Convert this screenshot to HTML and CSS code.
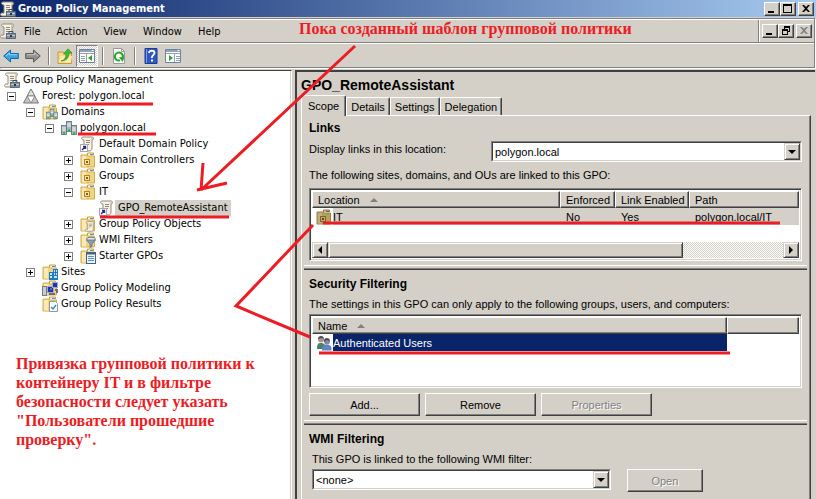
FILE: index.html
```html
<!DOCTYPE html>
<html lang="en">
<head>
    <meta charset="UTF-8">
    <meta name="viewport" content="width=device-width, initial-scale=1.0">
    <title>Group Policy Management</title>
    <link rel="stylesheet" href="styles.css">
</head>
<body>
    <!-- Icon set -->
    <svg class="sprite" aria-hidden="true">
        <symbol id="i-scroll" viewBox="0 0 16 16">
            <path d="M3 1h9c2 0 2 3 0 3v8c0 2-1 3-3 3H2c-2 0-2-3 0-3h2V4C1 4 1 1 3 1z" fill="#f6f2e4" stroke="#918b7a"/>
            <path d="M6 4.500h4M6 6.500h4M6 8.500h3" stroke="#8d8878"/>
            <path d="M12 4V1.500" stroke="#b9b29c"/>
        </symbol>
        <symbol id="i-gpm" viewBox="0 0 16 16">
            <use href="#i-scroll"/>
            <rect x="6.500" y="10.500" width="9" height="5" fill="#7c90a4" stroke="#4a5a69" stroke-width=".8"/>
            <path d="M9 10V8.500h4V10" fill="none" stroke="#3f4c59"/>
            <path d="M7 12.500h8" stroke="#bccad6"/>
            <rect x="10" y="12" width="2" height="2" fill="#2b3640"/>
        </symbol>
        <symbol id="i-gpo" viewBox="0 0 16 16">
            <use href="#i-scroll"/>
            <rect x=".5" y="8.500" width="7" height="7" fill="#fff" stroke="#a8a8b4"/>
            <path d="M2 14l3-3M3 10.500h2.500V13" fill="none" stroke="#27278a" stroke-width="1.400"/>
        </symbol>
        <symbol id="i-forest" viewBox="0 0 16 16">
            <path d="M8 1l7.500 14H.5z" fill="#c4c4c4" stroke="#777"/>
            <path d="M8 1l3.800 7H4.200z" fill="#dedede" stroke="#777" stroke-width=".8"/>
            <path d="M4.200 8h7.600L8 15z" fill="#fff" stroke="#777" stroke-width=".8"/>
        </symbol>
        <symbol id="i-folder" viewBox="0 0 16 16">
            <path d="M7.500 3V1h6v2" fill="#fff8d8" stroke="#c69c3c"/>
            <path d="M1 3h6l1 1h6.500v11H1z" fill="#f3d47e" stroke="#d3ac55"/>
            <path d="M2 4h4v10.500H2z" fill="#fbeab4"/>
            <path d="M10 2.500h3" stroke="#4d8fd0"/>
        </symbol>
        <symbol id="i-servers" viewBox="0 0 16 16">
            <g fill="#a9bac2" stroke="#5a6b74" stroke-width=".8">
                <rect x="5.500" y="1.500" width="5" height="10"/>
                <rect x=".5" y="5.500" width="5" height="9"/>
                <rect x="10.500" y="5.500" width="5" height="9"/>
            </g>
            <path d="M6 4h4M6 6h4M1 8h4M11 8h4M1 10h4M11 10h4" stroke="#e9f0f2"/>
            <path d="M7 9h2v2H7zM2 12h2v2H2zM12 12h2v2h-2z" fill="#2fc02f"/>
        </symbol>
        <symbol id="i-domains" viewBox="0 0 16 16">
            <use href="#i-folder"/>
            <svg x="4" y="4" width="12" height="12"><use href="#i-servers"/></svg>
        </symbol>
        <symbol id="i-ou" viewBox="0 0 16 16">
            <use href="#i-folder"/>
            <rect x="4.500" y="7.500" width="5" height="5" fill="#f8e6a6" stroke="#a8872f"/>
            <rect x="6" y="9" width="2" height="2" fill="#7c5f18"/>
        </symbol>
        <symbol id="i-gpos" viewBox="0 0 16 16">
            <use href="#i-folder"/>
            <svg x="5" y="5" width="11" height="11" viewBox="0 0 16 16"><use href="#i-scroll"/></svg>
        </symbol>
        <symbol id="i-wmi" viewBox="0 0 16 16">
            <use href="#i-folder"/>
            <ellipse cx="11" cy="7" rx="4.500" ry="1.800" fill="#e1e8ee" stroke="#6a7e90"/>
            <path d="M6.500 8l3.500 4v3.500l2-1V12l3.500-4z" fill="#8ba2b6" stroke="#5d7386" stroke-width=".8"/>
        </symbol>
        <symbol id="i-starter" viewBox="0 0 16 16">
            <use href="#i-folder"/>
            <rect x="6.500" y="4.500" width="9" height="11" fill="#eaf3fb" stroke="#49627c"/>
            <path d="M6 5.500h10" stroke="#49627c" stroke-width="2"/>
            <path d="M8 8.500h6M8 10.500h6M8 12.500h6" stroke="#5e8fc0"/>
        </symbol>
        <symbol id="i-sites" viewBox="0 0 16 16">
            <use href="#i-folder"/>
            <path d="M7 8h4V5h5v11H7z" fill="#1f79c4"/>
            <path d="M8 9h2v2H8zM8 12h2v2H8zM12 6h1v2h-1zM14 6h1v2h-1zM12 9h1v2h-1zM14 9h1v2h-1zM12 12h3v2h-3z" fill="#c5e7fb"/>
        </symbol>
        <symbol id="i-modeling" viewBox="0 0 16 16">
            <use href="#i-folder"/>
            <rect x=".5" y="6.500" width="4" height="9" fill="#c6ccd2" stroke="#747d86"/>
            <rect x="5.500" y="6.500" width="6" height="6" fill="#2032b8" stroke="#a5adb8"/>
            <rect x="10.500" y="2.500" width="5" height="5" fill="#2032b8" stroke="#a5adb8"/>
            <path d="M7 14h6M9 8v2M13 10h2v3" stroke="#666f7c" stroke-width="2" fill="none"/>
        </symbol>
        <symbol id="i-results" viewBox="0 0 16 16">
            <use href="#i-folder"/>
            <path d="M7.500 5.500h6l2 2v8h-8z" fill="#fff" stroke="#8899a8"/>
            <path d="M9 11l2 2 3-4" fill="none" stroke="#3685b5" stroke-width="1.300"/>
        </symbol>
        <symbol id="i-users" viewBox="0 0 16 16">
            <path d="M1 14c0-5 1-6 4-6s5 2 5 6z" fill="#4e7e68"/>
            <circle cx="5" cy="4.500" r="3" fill="#a8968e"/>
            <path d="M2 4c0-4 6-4 6 0L6 3z" fill="#494a56"/>
            <path d="M6 15.500c0-5 2-6 5-6s5 2 4.500 6z" fill="#5b86c8"/>
            <circle cx="11" cy="6.500" r="3" fill="#8f8698"/>
            <path d="M8 7c-1-5 6-5 6-1l-3-1z" fill="#474c62"/>
        </symbol>
        <symbol id="i-back" viewBox="0 0 16 16">
            <path d="M.7 8l6.800-6v3.500h7.800v5H7.500V14z" fill="#35a5ea" stroke="#1765a8" stroke-linejoin="round"/>
            <path d="M3 8l3.500-3v1.700H14" fill="none" stroke="#fff" stroke-opacity=".5"/>
        </symbol>
        <symbol id="i-forward" viewBox="0 0 16 16">
            <path d="M15.300 8L8.500 2v3.500H.7v5h7.800V14z" fill="#909090" stroke="#5a5a5a" stroke-linejoin="round"/>
            <path d="M13 8L9.500 5v1.700H2" fill="none" stroke="#fff" stroke-opacity=".5"/>
        </symbol>
        <symbol id="i-up" viewBox="0 0 16 16">
            <path d="M1 4h5l1 1h7.500v10.500H1z" fill="#f5d988" stroke="#c49a3c"/>
            <path d="M1.500 14L4 8h11l-1 7z" fill="#fbe8ac"/>
            <path d="M4 13c4-1 5-4 5-7H6.500L11 .8 15 5h-3c0 5-3 8-8 8z" fill="#41bd30" stroke="#268219" stroke-width=".6"/>
        </symbol>
        <symbol id="i-pane" viewBox="0 0 16 16">
            <path d="M.5 1.500h15v13H.5z" fill="#fff" stroke="#71839b"/>
            <path d="M1 3h14" stroke="#8ba2c0" stroke-width="2"/>
            <path d="M1 5.500h14M7.500 6v8M2 8.500h4M2 10.500h4M2 12.500h4" stroke="#92a0b2"/>
            <path d="M12.500 2h2v1h-2z" fill="#fff"/>
            <path d="M13 7v6l-4-3z" fill="#2ba52b"/>
        </symbol>
        <symbol id="i-pane-right" viewBox="0 0 16 16">
            <path d="M.5 1.500h15v13H.5z" fill="#fff" stroke="#71839b"/>
            <path d="M1 3h14" stroke="#8ba2c0" stroke-width="2"/>
            <path d="M1 5.500h14M9.500 6v8M11 8.500h4M11 10.500h4M11 12.500h4" stroke="#92a0b2"/>
            <path d="M12.500 2h2v1h-2z" fill="#fff"/>
            <path d="M4 7v6l4-3z" fill="#2ba52b"/>
        </symbol>
        <symbol id="i-refresh" viewBox="0 0 16 16">
            <path d="M2.500.5h8l3 3v12h-11z" fill="#fff" stroke="#9a9a9a"/>
            <path d="M10.500.5v3h3" fill="none" stroke="#9a9a9a"/>
            <path d="M9 12.300c-3 1-5.300-1-5.200-4C4 5 8 3.500 10.500 5.500c1.700 1.500 1.500 3.500.8 4.500" fill="none" stroke="#28a428" stroke-width="2"/>
            <path d="M8 9l5.500.5-2 4.500z" fill="#28a428"/>
        </symbol>
        <symbol id="i-help" viewBox="0 0 16 16">
            <path d="M2 .5h12v15H2z" fill="#2f57c4" stroke="#1c3a8e"/>
            <path d="M3.500 1v14" stroke="#7f9ce6"/>
            <path d="M6 5c0-3 5.500-3 5.500 0C11.500 7 8.800 7 8.800 10" fill="none" stroke="#fff" stroke-width="1.800"/>
            <path d="M8 11.500h2v2H8z" fill="#fff"/>
        </symbol>
        <symbol id="i-min" viewBox="0 0 12 10"><path d="M2 7h6v2H2z"/></symbol>
        <symbol id="i-max" viewBox="0 0 12 10"><path d="M1 0h9v9H1zM2 2v6h7V2z" fill-rule="evenodd"/></symbol>
        <symbol id="i-restore" viewBox="0 0 12 10">
            <path d="M4 0h6v6H8V5h1V2H5v1H4zM2 3h6v6H2zM3 5v3h4V5z" fill-rule="evenodd"/>
        </symbol>
        <symbol id="i-close" viewBox="0 0 12 10"><path d="M2 1h2l2 2 2-2h2L7 4.500 10 8H8L6 6 4 8H2l3-3.500z"/></symbol>
    </svg>

    <header class="titlebar">
        <svg class="icon"><use href="#i-gpm"/></svg>
        <h1>Group Policy Management</h1>
        <div class="window-buttons">
            <button type="button" aria-label="Minimize"><svg><use href="#i-min"/></svg></button>
            <button type="button" aria-label="Maximize"><svg><use href="#i-max"/></svg></button>
            <button type="button" class="close" aria-label="Close"><svg><use href="#i-close"/></svg></button>
        </div>
    </header>

    <div class="bars">
        <div class="menubar">
            <nav class="menu">
                <svg class="icon"><use href="#i-gpm"/></svg>
                <button type="button">File</button>
                <button type="button">Action</button>
                <button type="button">View</button>
                <button type="button">Window</button>
                <button type="button">Help</button>
            </nav>
            <div class="window-buttons">
                <button type="button" aria-label="Minimize"><svg><use href="#i-min"/></svg></button>
                <button type="button" aria-label="Restore"><svg><use href="#i-restore"/></svg></button>
                <button type="button" class="close" aria-label="Close" disabled><svg><use href="#i-close"/></svg></button>
            </div>
        </div>
        <div class="toolbar">
            <button type="button" aria-label="Back"><svg class="icon"><use href="#i-back"/></svg></button>
            <button type="button" aria-label="Forward"><svg class="icon"><use href="#i-forward"/></svg></button>
            <span class="separator"></span>
            <button type="button" aria-label="Up one level"><svg class="icon"><use href="#i-up"/></svg></button>
            <button type="button" class="pressed" aria-label="Show console tree"><svg class="icon"><use href="#i-pane"/></svg></button>
            <span class="separator"></span>
            <button type="button" aria-label="Refresh"><svg class="icon"><use href="#i-refresh"/></svg></button>
            <span class="separator"></span>
            <button type="button" aria-label="Help"><svg class="icon"><use href="#i-help"/></svg></button>
            <button type="button" aria-label="Show action pane"><svg class="icon"><use href="#i-pane-right"/></svg></button>
        </div>
    </div>

    <main>
        <aside class="tree">
            <div class="node root"><svg class="icon"><use href="#i-gpm"/></svg><span>Group Policy Management</span></div>
            <ul>
                <li>
                    <div class="node"><i class="box"></i><svg class="icon"><use href="#i-forest"/></svg><span>Forest: polygon.local</span></div>
                    <ul>
                        <li>
                            <div class="node"><i class="box"></i><svg class="icon"><use href="#i-domains"/></svg><span>Domains</span></div>
                            <ul>
                                <li>
                                    <div class="node"><i class="box"></i><svg class="icon"><use href="#i-servers"/></svg><span>polygon.local</span></div>
                                    <ul>
                                        <li><div class="node"><i class="box none"></i><svg class="icon"><use href="#i-gpo"/></svg><span>Default Domain Policy</span></div></li>
                                        <li><div class="node"><i class="box plus"></i><svg class="icon"><use href="#i-ou"/></svg><span>Domain Controllers</span></div></li>
                                        <li><div class="node"><i class="box plus"></i><svg class="icon"><use href="#i-ou"/></svg><span>Groups</span></div></li>
                                        <li>
                                            <div class="node"><i class="box"></i><svg class="icon"><use href="#i-ou"/></svg><span>IT</span></div>
                                            <ul>
                                                <li><div class="node"><i class="box none"></i><svg class="icon"><use href="#i-gpo"/></svg><span class="current">GPO_RemoteAssistant</span></div></li>
                                            </ul>
                                        </li>
                                        <li><div class="node"><i class="box plus"></i><svg class="icon"><use href="#i-gpos"/></svg><span>Group Policy Objects</span></div></li>
                                        <li><div class="node"><i class="box plus"></i><svg class="icon"><use href="#i-wmi"/></svg><span>WMI Filters</span></div></li>
                                        <li><div class="node"><i class="box plus"></i><svg class="icon"><use href="#i-starter"/></svg><span>Starter GPOs</span></div></li>
                                    </ul>
                                </li>
                            </ul>
                        </li>
                        <li><div class="node"><i class="box plus"></i><svg class="icon"><use href="#i-sites"/></svg><span>Sites</span></div></li>
                        <li><div class="node"><i class="box none"></i><svg class="icon"><use href="#i-modeling"/></svg><span>Group Policy Modeling</span></div></li>
                        <li><div class="node"><i class="box none"></i><svg class="icon"><use href="#i-results"/></svg><span>Group Policy Results</span></div></li>
                    </ul>
                </li>
            </ul>
            <p class="note">Привязка групповой политики к контейнеру IT и в фильтре безопасности следует указать "Пользователи прошедшие проверку".</p>
        </aside>

        <section class="details">
            <h2>GPO_RemoteAssistant</h2>
            <div class="tabs" role="tablist">
                <button type="button" role="tab" class="active" aria-selected="true">Scope</button>
                <button type="button" role="tab">Details</button>
                <button type="button" role="tab">Settings</button>
                <button type="button" role="tab">Delegation</button>
            </div>

            <div class="panel">
                <div class="group">
                    <h3>Links</h3>
                    <div class="field">
                        <label for="location">Display links in this location:</label>
                        <div class="combo">
                            <select id="location"><option>polygon.local</option></select>
                            <span class="drop"></span>
                        </div>
                    </div>
                    <p>The following sites, domains, and OUs are linked to this GPO:</p>
                    <div class="list links-list">
                        <table>
                            <thead>
                                <tr><th>Location <i class="sort"></i></th><th class="col-enforced">Enforced</th><th class="col-enabled">Link Enabled</th><th class="col-path">Path</th></tr>
                            </thead>
                            <tbody>
                                <tr class="inactive"><td><div class="cell"><svg class="icon"><use href="#i-ou"/></svg>IT</div></td><td>No</td><td>Yes</td><td>polygon.local/IT</td></tr>
                            </tbody>
                        </table>
                        <div class="scrollbar">
                            <button type="button" class="left" aria-label="Scroll left"></button>
                            <div class="track"><div class="thumb"></div></div>
                            <button type="button" class="right" aria-label="Scroll right"></button>
                        </div>
                    </div>
                </div>

                <div class="group">
                    <h3>Security Filtering</h3>
                    <p>The settings in this GPO can only apply to the following groups, users, and computers:</p>
                    <div class="list filter-list">
                        <table>
                            <thead>
                                <tr><th>Name <i class="sort"></i></th><th class="col-rest"></th></tr>
                            </thead>
                            <tbody>
                                <tr class="selected"><td><div class="cell"><svg class="icon"><use href="#i-users"/></svg>Authenticated Users</div></td><td></td></tr>
                            </tbody>
                        </table>
                    </div>
                    <div class="buttons">
                        <button type="button">Add...</button>
                        <button type="button">Remove</button>
                        <button type="button" disabled>Properties</button>
                    </div>
                </div>

                <div class="group">
                    <h3>WMI Filtering</h3>
                    <div class="wmi">
                        <label for="wmi">This GPO is linked to the following WMI filter:</label>
                        <div class="wmi-row">
                            <div class="combo">
                                <select id="wmi"><option>&lt;none&gt;</option></select>
                                <span class="drop"></span>
                            </div>
                            <button type="button" disabled>Open</button>
                        </div>
                    </div>
                </div>
            </div>
        </section>
    </main>

    <!-- Red pen marks drawn over the window -->
    <p class="caption">Пока созданный шаблон групповой политики</p>
    <svg class="marks" width="816" height="499" viewBox="0 0 816 499" aria-hidden="true">
        <path d="M77 104h76M78 134h78M100 217h129M323 223h457M319 353h411"/>
        <path d="M355 46L201 190M203 163l-2 27M227 183l-30 7"/>
        <path d="M313 225l-77 81 74 31"/>
    </svg>
</body>
</html>
```
FILE: styles.css
```css
* {
    box-sizing: border-box;
}

body {
    margin: 0;
    min-height: 100vh;
    display: flex;
    flex-direction: column;
    position: relative;
    background-color: #d4d0c8;
    color: #000;
    font-family: "DejaVu Sans Condensed", "DejaVu Sans", sans-serif;
    font-stretch: condensed;
    font-size: 11px;
    overflow: hidden;
}

h1, h2, h3, p, ul {
    margin: 0;
    padding: 0;
}

button, select {
    font: inherit;
    color: inherit;
    padding: 0;
    border-radius: 0;
}

.sprite {
    position: absolute;
    width: 0;
    height: 0;
}

.icon {
    width: 16px;
    height: 16px;
    flex: none;
}

/* Title bar */
.titlebar {
    height: 17px;
    display: flex;
    align-items: center;
    padding-right: 2px;
    background: linear-gradient(to right, #0a246a, #a6caf0);
    color: #fff;
}

.titlebar h1 {
    flex: 1;
    padding-left: 2px;
    font-size: 11px;
    line-height: 16px;
}

.window-buttons {
    display: flex;
    align-items: center;
}

.window-buttons button {
    width: 16px;
    height: 14px;
    display: flex;
    justify-content: center;
    background-color: #d4d0c8;
    border: 1px solid;
    border-color: #fff #404040 #404040 #fff;
    box-shadow: inset -1px -1px #808080;
    color: #000;
}

.window-buttons svg {
    width: 12px;
    height: 10px;
    margin-top: 1px;
    fill: currentColor;
}

.window-buttons .close {
    margin-left: 2px;
}

.window-buttons button:disabled {
    color: #808080;
}

/* Menu and toolbar */
.bars {
    margin: 1px 1px 2px 0;
    border: 1px solid #808080;
    border-left: none;
    box-shadow: 1px 1px #fff;
}

.menubar {
    height: 24px;
    display: flex;
    border-bottom: 1px solid #808080;
    border-top: 1px solid #fff;
}

.menu {
    flex: 1;
    display: flex;
    align-items: center;
    border-right: 1px solid #808080;
}

.menu button {
    border: none;
    background: none;
    padding: 0 8px;
}

.menubar .window-buttons {
    padding: 0 2px;
    border-left: 1px solid #fff;
}

.toolbar {
    height: 24px;
    display: flex;
    align-items: center;
    border-top: 1px solid #fff;
}

.toolbar button {
    width: 22px;
    height: 22px;
    display: flex;
    align-items: center;
    justify-content: center;
    background: none;
    border: none;
}

.toolbar .pressed {
    background: repeating-conic-gradient(#fff 0 25%, #d4d0c8 0 50%) 0 0 / 2px 2px;
    border: 1px solid;
    border-color: #808080 #fff #fff #808080;
}

.separator {
    width: 2px;
    height: 18px;
    margin: 0 4px;
    border-left: 1px solid #808080;
    border-right: 1px solid #fff;
}

/* Two panes */
main {
    flex: 1;
    display: flex;
    gap: 3px;
    padding-right: 1px;
}

.tree {
    width: 292px;
    flex: none;
    padding-top: 1px;
    background-color: #fff;
    border-top: 1px solid #404040;
    border-right: 1px solid #fff;
    box-shadow: inset -1px 0 #d4d0c8;
}

.tree ul {
    list-style: none;
}

.tree ul ul {
    padding-left: 19px;
}

.node {
    height: 16px;
    display: flex;
    align-items: center;
    padding-left: 7px;
    line-height: 16px;
    white-space: nowrap;
}

.node.root {
    padding-left: 4px;
}

.node span {
    padding: 0 3px;
}

.node .current {
    background-color: #d4d0c8;
}

.box {
    width: 9px;
    height: 9px;
    margin-right: 7px;
    border: 1px solid #808080;
    background: linear-gradient(#000, #000) center / 5px 1px no-repeat;
}

.box.plus {
    background: linear-gradient(#000, #000) center / 5px 1px no-repeat, linear-gradient(#000, #000) center / 1px 5px no-repeat;
}

.box.none {
    visibility: hidden;
}

.note, .caption {
    color: #ed1c24;
    font-family: "Liberation Serif", serif;
    font-size: 16px;
    font-weight: bold;
    line-height: 19px;
}

.note {
    margin: 42px 32px 0 16px;
}

.caption {
    position: absolute;
    top: 19px;
    left: 299px;
}

.details {
    flex: 1;
    min-width: 0;
    display: flex;
    flex-direction: column;
    padding: 3px 4px 0;
    border-top: 2px solid #404040;
    border-left: 2px solid #404040;
    font-family: "Liberation Sans", Arial, sans-serif;
}

.details h2 {
    font-size: 14px;
    line-height: 20px;
}

.tabs {
    display: flex;
    align-items: flex-end;
}

.tabs button {
    height: 18px;
    padding: 0 4px;
    background-color: #d4d0c8;
    border: 1px solid;
    border-color: #fff #404040 transparent #fff;
    border-bottom: none;
    border-radius: 2px 2px 0 0;
    box-shadow: inset -1px 0 #808080;
}

.tabs .active {
    height: 21px;
    padding: 0 6px;
    margin-bottom: -1px;
    position: relative;
}

.panel {
    flex: 1;
    border: 1px solid;
    border-color: #fff #404040 #404040 #fff;
    border-bottom: none;
    box-shadow: inset -1px 0 #808080;
    padding: 3px 3px 0 2px;
}

.group {
    padding: 0 5px 8px 5px;
    margin-bottom: 5px;
    border-bottom: 1px solid #404040;
    box-shadow: inset 0 -1px #808080, inset 0 -3px #d4d0c8, inset 0 -4px #fff;
}

.group:last-child {
    border-bottom: none;
    box-shadow: none;
}

.group h3 {
    font-size: 12px;
    line-height: 19px;
}

.group p {
    line-height: 20px;
}

.field {
    display: flex;
    margin: 3px 0;
}

.field label {
    width: 182px;
    line-height: 16px;
}

.combo {
    position: relative;
    flex: 1;
    height: 21px;
    border: 1px solid;
    border-color: #808080 #fff #fff #808080;
}

.combo select {
    appearance: none;
    display: block;
    width: 100%;
    height: 19px;
    padding: 0 2px;
    background-color: #fff;
    border: 1px solid;
    border-color: #404040 #d4d0c8 #d4d0c8 #404040;
}

.drop {
    position: absolute;
    top: 1px;
    right: 1px;
    width: 16px;
    height: 17px;
    display: flex;
    align-items: center;
    justify-content: center;
    background-color: #d4d0c8;
    border: 1px solid;
    border-color: #d4d0c8 #404040 #404040 #d4d0c8;
    box-shadow: inset 1px 1px #fff, inset -1px -1px #808080;
    pointer-events: none;
}

.drop::before {
    content: "";
    border: 4px solid transparent;
    border-top-color: #000;
    border-bottom: none;
}

/* List views */
.list {
    display: flex;
    flex-direction: column;
    background-color: #fff;
    border: 1px solid;
    border-color: #808080 #fff #fff #808080;
    box-shadow: inset 1px 1px #404040, inset -1px -1px #d4d0c8;
    padding: 2px;
}

.links-list {
    height: 73px;
    margin-top: 3px;
    justify-content: space-between;
}

.filter-list {
    height: 74px;
}

.list table {
    width: 100%;
    table-layout: fixed;
    border-collapse: separate;
    border-spacing: 0;
}

.list th {
    height: 17px;
    padding: 0 5px;
    text-align: left;
    font-weight: normal;
    background-color: #d4d0c8;
    border: 1px solid;
    border-color: #fff #404040 #404040 #fff;
    box-shadow: inset -1px -1px #808080;
    white-space: nowrap;
}

.list td {
    height: 17px;
    padding: 0 6px;
    white-space: nowrap;
}

.cell {
    display: flex;
    align-items: center;
    gap: 1px;
}

.col-enforced {
    width: 55px;
}

.col-enabled {
    width: 74px;
}

.col-path {
    width: 110px;
}

.col-rest {
    width: 72px;
}

.inactive td {
    background-color: #d4d0c8;
}

.inactive .icon {
    filter: brightness(0.75);
}

.list td:first-child {
    padding-left: 4px;
    background-image: linear-gradient(#fff, #fff);
    background-size: 21px 100%;
    background-repeat: no-repeat;
}

.selected td:first-child {
    background-color: #0a246a;
    color: #fff;
}

.sort {
    display: inline-block;
    margin: 0 0 2px 7px;
    border: 4px solid transparent;
    border-bottom-color: #808080;
    border-top: none;
}

.scrollbar {
    display: flex;
    height: 16px;
}

.scrollbar button {
    width: 16px;
    display: flex;
    align-items: center;
    justify-content: center;
}

.scrollbar button::before {
    content: "";
    border: 4px solid transparent;
}

.scrollbar .left::before {
    border-right-color: #000;
    border-left: none;
}

.scrollbar .right::before {
    border-left-color: #000;
    border-right: none;
}

.scrollbar button, .thumb {
    background-color: #d4d0c8;
    border: 1px solid;
    border-color: #d4d0c8 #404040 #404040 #d4d0c8;
    box-shadow: inset 1px 1px #fff, inset -1px -1px #808080;
}

.track {
    flex: 1;
    background: repeating-conic-gradient(#fff 0 25%, #d4d0c8 0 50%) 0 0 / 2px 2px;
}

.thumb {
    width: 78%;
    height: 100%;
}

/* Push buttons */
.buttons {
    display: flex;
    gap: 5px;
    padding-top: 5px;
}

.buttons button, .wmi-row button {
    width: 111px;
    height: 23px;
    background-color: #d4d0c8;
    border: 1px solid;
    border-color: #fff #404040 #404040 #fff;
    box-shadow: inset -1px -1px #808080;
}

.buttons button:disabled, .wmi-row button:disabled {
    color: #808080;
    text-shadow: 1px 1px #fff;
}

.wmi {
    padding-left: 3px;
}

.wmi label {
    display: block;
    line-height: 20px;
}

.wmi-row {
    display: flex;
    gap: 16px;
}

.wmi-row .combo {
    flex: none;
    width: 61%;
}

.wmi-row button {
    width: 76px;
}

.marks {
    position: absolute;
    top: 0;
    left: 0;
    pointer-events: none;
    fill: none;
    stroke: #ed1c24;
    stroke-width: 3;
}
```
